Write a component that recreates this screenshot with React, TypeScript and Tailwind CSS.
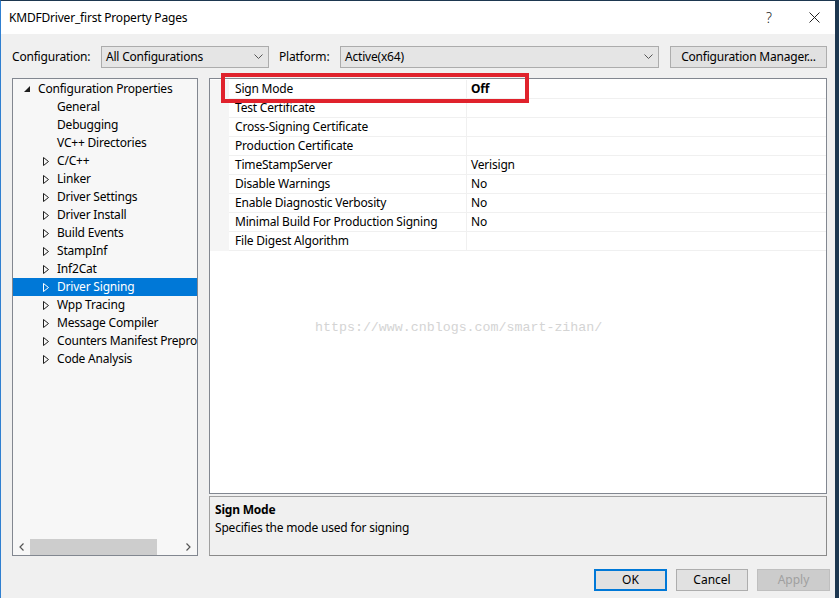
import React from "react";

const font = { fontFamily: '"Noto Sans", "Open Sans", sans-serif' };

function Expanded() {
  return (
    <svg width="6" height="6" viewBox="0 0 6 6" className="shrink-0">
      <polygon points="6,0 6,6 0,6" fill="#1e1e1e" />
    </svg>
  );
}

function Collapsed({ white }: { white?: boolean }) {
  return (
    <svg width="6" height="9" viewBox="0 0 6 9" className="shrink-0">
      <polygon points="0.5,0.5 5.5,4.5 0.5,8.5" fill="none" stroke={white ? "#ffffff" : "#1e1e1e"} strokeWidth="1" />
    </svg>
  );
}

function Chevron() {
  return (
    <svg width="9" height="6" viewBox="0 0 9 6" className="shrink-0">
      <polyline points="0.5,0.5 4.5,4.5 8.5,0.5" fill="none" stroke="#555" strokeWidth="1" />
    </svg>
  );
}

const treeItems: { label: string; expandable: boolean; selected?: boolean }[] = [
  { label: "General", expandable: false },
  { label: "Debugging", expandable: false },
  { label: "VC++ Directories", expandable: false },
  { label: "C/C++", expandable: true },
  { label: "Linker", expandable: true },
  { label: "Driver Settings", expandable: true },
  { label: "Driver Install", expandable: true },
  { label: "Build Events", expandable: true },
  { label: "StampInf", expandable: true },
  { label: "Inf2Cat", expandable: true },
  { label: "Driver Signing", expandable: true, selected: true },
  { label: "Wpp Tracing", expandable: true },
  { label: "Message Compiler", expandable: true },
  { label: "Counters Manifest Preprocessor", expandable: true },
  { label: "Code Analysis", expandable: true },
];

const props: [string, string, boolean?][] = [
  ["Sign Mode", "Off", true],
  ["Test Certificate", ""],
  ["Cross-Signing Certificate", ""],
  ["Production Certificate", ""],
  ["TimeStampServer", "Verisign"],
  ["Disable Warnings", "No"],
  ["Enable Diagnostic Verbosity", "No"],
  ["Minimal Build For Production Signing", "No"],
  ["File Digest Algorithm", ""],
];

export default function App() {
  return (
    <div className="w-[839px] h-[598px] bg-[#1d3750] overflow-hidden text-[12px] text-[#000]" style={font}>
      <div className="w-[835px] h-[598px] flex flex-col border-l border-t border-l-[#2f7fd0] border-t-[#1d3750] bg-[#f0f0f0]">
        {/* Title bar */}
        <div className="h-[33px] bg-white flex items-center pl-[8px] shrink-0">
          <span className="flex-1 leading-none pt-[1px] tracking-[-0.2px]">KMDFDriver_first Property Pages</span>
          <span className="w-[14px] text-center text-[14px] leading-none mr-[33px] font-light text-[#222]">?</span>
          <svg width="11" height="11" viewBox="0 0 11 11" className="mr-[15px]">
            <line x1="0.5" y1="0.5" x2="10.5" y2="10.5" stroke="#222" strokeWidth="1" />
            <line x1="10.5" y1="0.5" x2="0.5" y2="10.5" stroke="#222" strokeWidth="1" />
          </svg>
        </div>

        {/* Config row */}
        <div className="flex items-center h-[22px] mt-[12px] pl-[11px] shrink-0">
          <span className="w-[89px] tracking-[-0.2px]">Configuration:</span>
          <div className="w-[168px] h-[22px] bg-[#e5e5e5] border border-[#acacac] flex items-center pl-[4px] pr-[5px]">
            <span className="flex-1 tracking-[-0.2px]">All Configurations</span>
            <Chevron />
          </div>
          <span className="ml-[10px] w-[61px] tracking-[-0.2px]">Platform:</span>
          <div className="w-[319px] h-[22px] bg-[#e5e5e5] border border-[#acacac] flex items-center pl-[4px] pr-[5px]">
            <span className="flex-1 tracking-[-0.2px]">Active(x64)</span>
            <Chevron />
          </div>
          <div className="ml-[11px] w-[157px] h-[22px] bg-[#e1e1e1] border border-[#adadad] flex items-center justify-center tracking-[-0.2px]">
            Configuration Manager...
          </div>
        </div>

        {/* Main */}
        <div className="flex mt-[10px] pl-[11px] h-[478px] shrink-0">
          {/* Tree */}
          <div className="w-[186px] h-[478px] border border-[#828790] bg-[#f7f7f7] flex flex-col">
            <div className="flex-1 pt-[1px] overflow-hidden">
              <div className="h-[18px] flex items-center pl-[11px]">
                <Expanded />
                <span className="ml-[8px] whitespace-nowrap tracking-[-0.2px]">Configuration Properties</span>
              </div>
              {treeItems.map((t) => (
                <div
                  key={t.label}
                  className={
                    "h-[18px] flex items-center pl-[30px] whitespace-nowrap overflow-hidden " +
                    (t.selected ? "bg-[#0078d7] text-white" : "")
                  }
                >
                  <span className="w-[14px] shrink-0 flex items-center">
                    {t.expandable ? <Collapsed white={t.selected} /> : null}
                  </span>
                  <span className="shrink-0 tracking-[-0.2px]">{t.label}</span>
                </div>
              ))}
            </div>
            <div className="h-[17px] flex items-center shrink-0">
              <span className="w-[17px] flex justify-center">
                <svg width="5" height="8" viewBox="0 0 5 8">
                  <polyline points="4.5,0.5 1,4 4.5,7.5" fill="none" stroke="#555" strokeWidth="1.2" />
                </svg>
              </span>
              <div className="w-[127px] h-[16px] bg-[#cdcdcd]" />
              <div className="flex-1" />
              <span className="w-[17px] flex justify-center">
                <svg width="5" height="8" viewBox="0 0 5 8">
                  <polyline points="0.5,0.5 4,4 0.5,7.5" fill="none" stroke="#555" strokeWidth="1.2" />
                </svg>
              </span>
            </div>
          </div>

          {/* Right column */}
          <div className="ml-[11px] w-[618px] flex flex-col">
            <div className="relative h-[416px] border border-[#828790] bg-white">
              <div className="flex flex-col pt-[1px]">
                {props.map(([name, value, bold]) => (
                  <div key={name} className="h-[19px] flex">
                    <div className="w-[19px] bg-[#f5f5f5]" />
                    <div className="w-[238px] border-b border-r border-[#f0f0f0] flex items-center pl-[6px] whitespace-nowrap tracking-[-0.2px]">
                      {name}
                    </div>
                    <div className={"flex-1 border-b border-[#f0f0f0] flex items-center pl-[4px] tracking-[-0.2px] " + (bold ? "font-bold" : "")}>
                      {value}
                    </div>
                  </div>
                ))}
              </div>
              {/* red highlight */}
              <div className="absolute left-[11px] top-[-6px] w-[308px] h-[30px] border-[4px] border-[#e0222c]" />
              {/* watermark */}
              <div
                className="absolute left-[105px] top-[239px] text-[13.3px] text-[#d4d4d4] whitespace-nowrap"
                style={{ fontFamily: '"Liberation Mono", monospace' }}
              >
                https://www.cnblogs.com/smart-zihan/
              </div>
            </div>
            <div className="mt-[2px] h-[60px] border border-[#a0a0a0] border-b-[#8a8a8a] border-r-[#8a8a8a] bg-[#f0f0f0] pl-[5px] pt-[4px] leading-[18px]">
              <div className="font-bold tracking-[-0.2px]">Sign Mode</div>
              <div className="tracking-[-0.2px]">Specifies the mode used for signing</div>
            </div>
          </div>
        </div>

        {/* Buttons */}
        <div className="flex justify-end mt-[13px] pr-[5px] gap-[9px]">
          <div className="w-[73px] h-[22px] bg-[#e1e1e1] border-2 border-[#0078d7] flex items-center justify-center">OK</div>
          <div className="w-[72px] h-[22px] bg-[#e1e1e1] border border-[#adadad] flex items-center justify-center">Cancel</div>
          <div className="w-[73px] h-[22px] bg-[#cccccc] border border-[#bfbfbf] flex items-center justify-center text-[#a0a0a0]">Apply</div>
        </div>
      </div>
    </div>
  );
}
